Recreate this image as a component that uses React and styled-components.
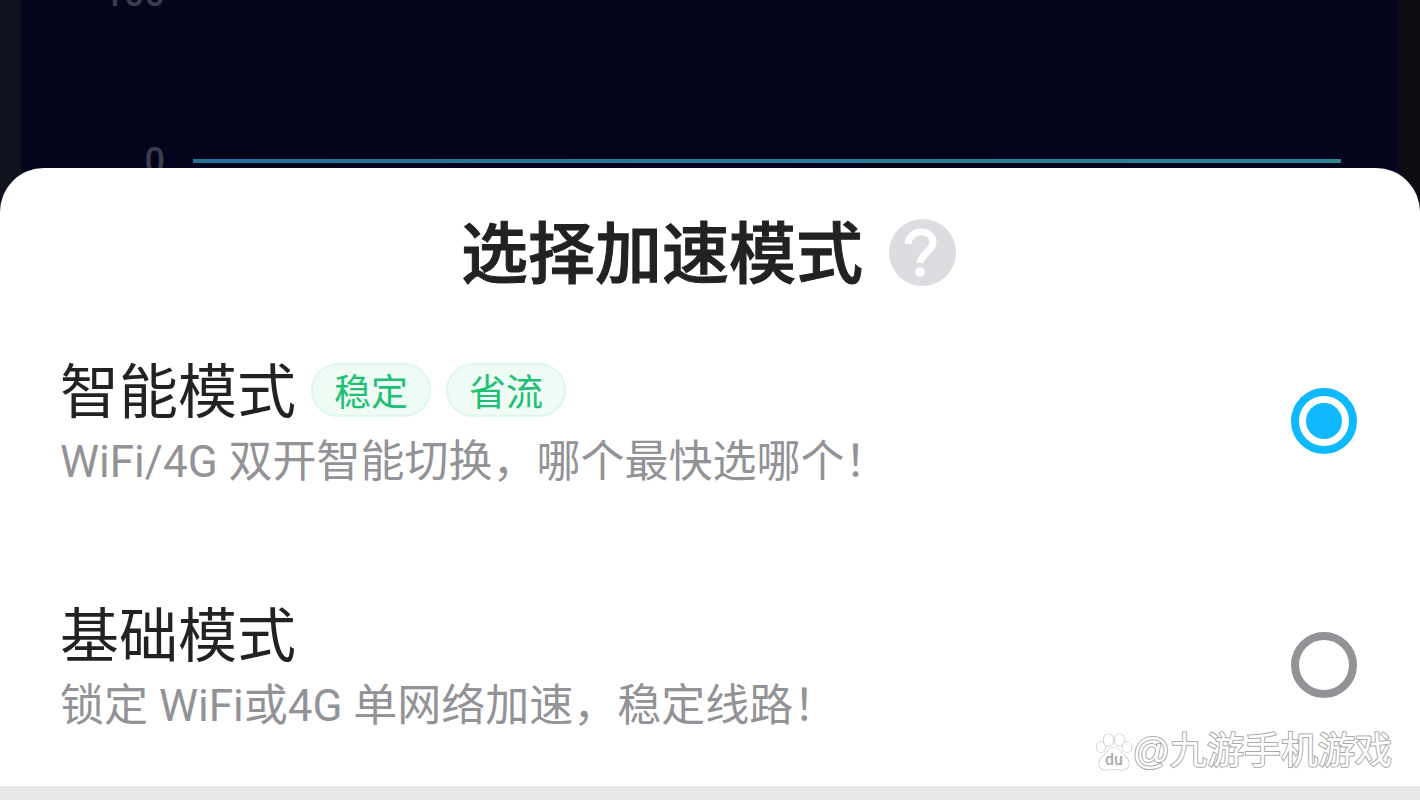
import React, { useState } from 'react';
import styled, { createGlobalStyle } from 'styled-components';

const GlobalStyle = createGlobalStyle`
  * {
    box-sizing: border-box;
  }
  body {
    margin: 0;
    background: #e8e8e8;
    font-family: Roboto, 'Noto Sans CJK SC', sans-serif;
  }
`;

const Page = styled.div`
  position: relative;
  display: flex;
  flex-direction: column;
  min-height: 100vh;
`;

const Backdrop = styled.div`
  height: 212px;
  padding: 0 21px;
  background: linear-gradient(90deg, #10131e, #0e0d13);
`;

const Chart = styled.div`
  display: flex;
  flex-direction: column;
  justify-content: flex-end;
  gap: 133px;
  height: 100%;
  padding: 0 58px 34px 80px;
  overflow: hidden;
  background: #04041c;
`;

const ChartRow = styled.div`
  display: flex;
  flex: none;
  align-items: center;
  gap: 28px;
  height: 34px;
`;

const AxisLabel = styled.span`
  width: 64px;
  color: #3a3b4c;
  font-size: 36px;
  font-weight: 500;
  line-height: 34px;
  text-align: right;
`;

const ChartLine = styled.div`
  flex: 1;
  height: 4px;
  background: linear-gradient(90deg, #23709a, #2b8594);
`;

const Sheet = styled.form`
  position: relative;
  margin-top: -44px;
  padding: 50px 63px 49px 60px;
  border-radius: 44px 44px 0 0;
  background: #fff;
`;

const SheetHeader = styled.header`
  display: flex;
  align-items: center;
  justify-content: center;
  gap: 26px;
  height: 68px;
  margin-bottom: 63px;
`;

const Title = styled.h1`
  margin: 0;
  padding-top: 6px;
  color: #222;
  font-size: 67px;
  font-weight: 500;
  line-height: 68px;
  -webkit-text-stroke: 1px #222;
`;

const HelpButton = styled.button`
  width: 67px;
  height: 67px;
  padding: 0;
  border: 0;
  border-radius: 50%;
  background: #dcdce1;
  cursor: pointer;

  svg {
    display: block;
  }
`;

const Options = styled.div`
  display: flex;
  flex-direction: column;
  gap: 100px;
`;

const Option = styled.label`
  display: flex;
  align-items: center;
  justify-content: space-between;
  cursor: pointer;
`;

const NameRow = styled.div`
  display: flex;
  align-items: center;
  gap: 15px;
  height: 82px;
`;

const Name = styled.span`
  padding-top: 6px;
  color: #222;
  font-size: 59px;
  line-height: 76px;
`;

const Tag = styled.span`
  padding: 0 21px;
  border: 2px solid #def7ec;
  border-radius: 27px;
  background: #effcf6;
  color: #1fbf75;
  font-family: 'Noto Sans CJK SC', sans-serif;
  font-size: 37px;
  line-height: 50px;
`;

const Description = styled.div`
  color: #929297;
  font-size: 44px;
  line-height: 62px;
`;

const Radio = styled.input`
  flex: none;
  width: 66px;
  height: 66px;
  margin: 0;
  padding: 7px;
  border: 8px solid #929297;
  border-radius: 50%;
  appearance: none;
  cursor: pointer;

  &:checked {
    border-color: #0fb9fd;
    background: #0fb9fd content-box;
  }
`;

const Watermark = styled.div`
  position: absolute;
  right: 28px;
  bottom: 28px;
  display: flex;
  align-items: center;
  color: #fff;
  font-family: 'Liberation Sans', 'Noto Sans CJK SC', sans-serif;
  font-size: 37px;
  line-height: 40px;
  -webkit-text-stroke: 2px #aaa;
  paint-order: stroke fill;

  svg text {
    -webkit-text-stroke: 0;
  }
`;

const modes = [
  {
    id: 'smart',
    name: '智能模式',
    tags: ['稳定', '省流'],
    description: 'WiFi/4G 双开智能切换，哪个最快选哪个！',
  },
  {
    id: 'basic',
    name: '基础模式',
    tags: [],
    description: '锁定 WiFi或4G 单网络加速，稳定线路！',
  },
];

const QuestionMark = () => (
  <svg width="67" height="67" viewBox="0 0 67 67" fill="none">
    <path
      d="M19 25C20 17 26 13 32 13C39.500 13 44 17.500 44 23.500C44 32 32 34 31 44"
      stroke="#fff"
      strokeWidth="7"
    />
    <circle cx="31" cy="53" r="5" fill="#fff" />
  </svg>
);

const PawLogo = () => (
  <svg
    width="36"
    height="38"
    viewBox="0 0 36 38"
    fill="#fff"
    stroke="#c0c0c0"
    strokeWidth="1.2"
  >
    <ellipse cx="5" cy="14" rx="4.500" ry="5.500" />
    <ellipse cx="12.500" cy="7" rx="5" ry="6" />
    <ellipse cx="23.500" cy="7" rx="5" ry="6" />
    <ellipse cx="31" cy="14" rx="4.500" ry="5.500" />
    <path d="M18 15C12 15 11 20 7 23C1 28 2 37 10 37C13 37 15 36 18 36C21 36 23 37 26 37C34 37 35 28 29 23C25 20 24 15 18 15Z" />
    <text
      x="18"
      y="32"
      fill="#aaa"
      stroke="none"
      fontFamily="Roboto, sans-serif"
      fontSize="16"
      fontWeight="500"
      textAnchor="middle"
    >
      du
    </text>
  </svg>
);

const App = () => {
  const [mode, setMode] = useState('smart');

  return (
    <Page>
      <GlobalStyle />
      <Backdrop>
        <Chart>
          <ChartRow>
            <AxisLabel>100</AxisLabel>
          </ChartRow>
          <ChartRow>
            <AxisLabel>0</AxisLabel>
            <ChartLine />
          </ChartRow>
        </Chart>
      </Backdrop>
      <Sheet>
        <SheetHeader>
          <Title>选择加速模式</Title>
          <HelpButton type="button" aria-label="帮助">
            <QuestionMark />
          </HelpButton>
        </SheetHeader>
        <Options>
          {modes.map(({ id, name, tags, description }) => (
            <Option key={id}>
              <div>
                <NameRow>
                  <Name>{name}</Name>
                  {tags.map((tag) => (
                    <Tag key={tag}>{tag}</Tag>
                  ))}
                </NameRow>
                <Description>{description}</Description>
              </div>
              <Radio
                type="radio"
                name="mode"
                value={id}
                checked={mode === id}
                onChange={() => setMode(id)}
              />
            </Option>
          ))}
        </Options>
      </Sheet>
      <Watermark>
        <PawLogo />
        <span>@九游手机游戏</span>
      </Watermark>
    </Page>
  );
};

export default App;
